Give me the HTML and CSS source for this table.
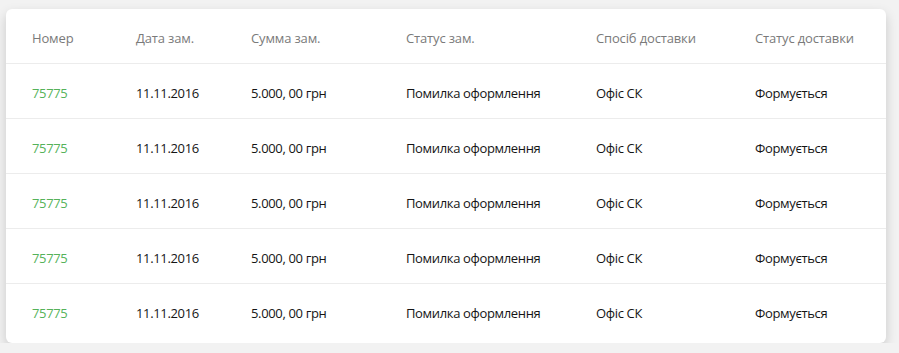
FILE: index.html
```html
<!DOCTYPE html>
<html lang="uk">
<head>
<meta charset="utf-8">
<link rel="stylesheet" href="styles.css">
</head>
<body>
<div class="card">
  <table class="orders">
    <colgroup>
      <col class="c1"><col class="c2"><col class="c3"><col class="c4"><col class="c5"><col class="c6">
    </colgroup>
    <thead>
      <tr>
        <th>Номер</th><th>Дата зам.</th><th>Сумма зам.</th><th>Статус зам.</th><th>Спосіб доставки</th><th>Статус доставки</th>
      </tr>
    </thead>
    <tbody>
      <tr><td class="num">75775</td><td>11.11.2016</td><td>5.000, 00 грн</td><td>Помилка оформлення</td><td>Офіс СК</td><td>Формується</td></tr>
      <tr><td class="num">75775</td><td>11.11.2016</td><td>5.000, 00 грн</td><td>Помилка оформлення</td><td>Офіс СК</td><td>Формується</td></tr>
      <tr><td class="num">75775</td><td>11.11.2016</td><td>5.000, 00 грн</td><td>Помилка оформлення</td><td>Офіс СК</td><td>Формується</td></tr>
      <tr><td class="num">75775</td><td>11.11.2016</td><td>5.000, 00 грн</td><td>Помилка оформлення</td><td>Офіс СК</td><td>Формується</td></tr>
      <tr><td class="num">75775</td><td>11.11.2016</td><td>5.000, 00 грн</td><td>Помилка оформлення</td><td>Офіс СК</td><td>Формується</td></tr>
    </tbody>
  </table>
</div>
</body>
</html>
```
FILE: styles.css
```css
html, body {
  margin: 0;
  padding: 0;
  background: #f2f2f2;
}
body {
  padding: 9px 13px 0 6px;
  font-family: "Open Sans", "Noto Sans", sans-serif;
  font-size: 13px;
}
.card {
  width: 880px;
  background: #fff;
  border-radius: 6px;
  box-shadow: 0 5px 12px rgba(0, 0, 0, 0.17);
  padding-bottom: 5px;
}
.orders {
  width: 100%;
  border-collapse: collapse;
  table-layout: fixed;
}
.c1 { width: 130px; }
.c2 { width: 115px; }
.c3 { width: 155px; }
.c4 { width: 190px; }
.c5 { width: 159px; }
.orders th {
  height: 50px;
  padding: 4px 0 0;
  text-align: left;
  font-weight: normal;
  color: #7a7a7a;
  letter-spacing: -0.15px;
  border-bottom: 1px solid #ececec;
}
.orders th:first-child, .orders td:first-child {
  padding-left: 26px;
}
.orders td {
  height: 50px;
  padding: 4px 0 0;
  color: #151515;
  letter-spacing: -0.35px;
  border-bottom: 1px solid #ececec;
}
.orders tbody tr:last-child td {
  border-bottom: none;
}
.orders td.num {
  color: #55b25a;
}
```
